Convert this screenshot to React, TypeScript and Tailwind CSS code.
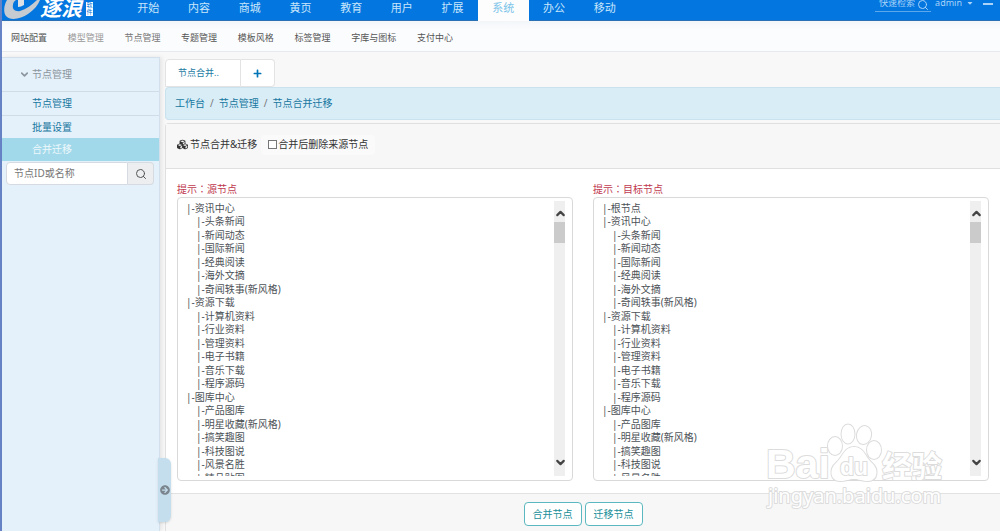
import { useRef } from "react";
import { ChevronDown, ChevronUp, Search } from "lucide-react";
import { FaArrowCircleRight, FaCaretDown, FaCubes, FaPlus } from "react-icons/fa";

type TreeNode = { name: string; level: number };

const modules = ["开始", "内容", "商城", "黄页", "教育", "用户", "扩展", "系统", "办公", "移动"];
const activeModule = "系统";

const sections = [
  { name: "网站配置", tone: "text-[#555]" },
  { name: "模型管理", tone: "text-[#999]" },
  { name: "节点管理", tone: "text-[#777]" },
  { name: "专题管理", tone: "text-[#555]" },
  { name: "模板风格", tone: "text-[#555]" },
  { name: "标签管理", tone: "text-[#555]" },
  { name: "字库与图标", tone: "text-[#555]" },
  { name: "支付中心", tone: "text-[#555]" },
];

const group = (name: string, children: string[]): TreeNode[] => [
  { name, level: 0 },
  ...children.map((child) => ({ name: child, level: 1 })),
];

const nodes: TreeNode[] = [
  ...group("资讯中心", ["头条新闻", "新闻动态", "国际新闻", "经典阅读", "海外文摘", "奇闻轶事(新风格)"]),
  ...group("资源下载", ["计算机资料", "行业资料", "管理资料", "电子书籍", "音乐下载", "程序源码"]),
  ...group("图库中心", ["产品图库", "明星收藏(新风格)", "搞笑趣图", "科技图说", "风景名胜", "精品贴图"]),
];

const targetNodes: TreeNode[] = [{ name: "根节点", level: 0 }, ...nodes];

function Logo() {
  return (
    <a href="#" aria-label="逐浪" className="flex h-[21px] w-[121px] shrink-0 items-start text-white">
      <svg className="ml-0.5 h-[21px] w-[36px] shrink-0" viewBox="0 0 36 21" aria-hidden="true">
        <path
          d="M3 0C0 5 -1 12 2 16C6 21 17 19 24 14C30 10 34 5 36 0H33C28 5 22 9 16 11C11 12 8 9 9 5C9 3 10 1 12 0Z"
          fill="#c6cbd1"
        />
        <path d="M14 0h6v5q-3 2 -6 2Z" fill="#dde1e6" />
      </svg>
      <span className="text-[21px] leading-4 font-bold italic">逐浪</span>
      <span className="mt-0.5 ml-1 grid w-[7px] place-items-center bg-white text-[6px] leading-[7px] text-[#0275d8]">
        <span>软</span>
        <span>件</span>
      </span>
    </a>
  );
}

function Header() {
  return (
    <header className="flex h-[21px] border-b border-[#2b6fb5] bg-[#0376e0]">
      <Logo />
      <nav className="grid w-[507px] shrink-0 grid-cols-10">
        {modules.map((name) => (
          <a
            key={name}
            href="#"
            className={
              name === activeModule
                ? "h-[21px] bg-[#fdfdfe] pb-[6px] text-center text-[11px] leading-[15px] text-[#7cc4e8]"
                : "h-[20px] pb-[5px] text-center text-[11px] leading-[15px] text-[#c9e6fb]"
            }
          >
            {name}
          </a>
        ))}
      </nav>
      <div className="-mt-[6px] mr-[7px] ml-auto flex h-[18px] items-center text-[#a9d3f7]">
        <label className="flex h-[18px] items-center border-b border-[#5ca8ea] pl-1">
          <input
            aria-label="快速检索"
            placeholder="快速检索"
            className="w-[38px] bg-transparent text-[9px] leading-4 outline-none placeholder:text-[#a9d3f7]"
          />
          <Search className="mt-1 mr-0.5 size-3" strokeWidth={2} />
        </label>
        <button type="button" className="ml-1 flex items-center gap-1 text-[9px] leading-4">
          admin
          <FaCaretDown className="size-2" />
        </button>
        <button type="button" aria-label="最小化" className="mt-px ml-[9px] h-0.5 w-[10px] bg-[#a9d3f7]" />
      </div>
    </header>
  );
}

function SubNav() {
  return (
    <nav className="h-[31px] border-b border-[#e6e9ee] bg-gradient-to-b from-[#f3f6f9] to-[#fbfcfe] to-30% pl-[9px]">
      <div className="flex h-full w-[442px] items-center justify-between pt-1">
        {sections.map(({ name, tone }) => (
          <a key={name} href="#" className={`text-[9px] leading-4 ${tone}`}>
            {name}
          </a>
        ))}
      </div>
    </nav>
  );
}

function Sidebar() {
  return (
    <aside className="relative w-[158px] shrink-0 border-t border-r border-[#d3e0eb] bg-[#e4f0fa] text-[10px] shadow-[2px_0_4px_rgba(0,0,0,0.08)]">
      <button
        type="button"
        className="flex h-[34px] w-full items-center gap-0.5 border-b border-[#cfdde9] pl-[17px] text-[#8b959d]"
      >
        <ChevronDown className="size-[11px]" strokeWidth={3.5} />
        节点管理
      </button>
      <a href="#" className="block border-b border-[#cfdde9] pl-[30px] leading-[23px] text-[#17779f]">
        节点管理
      </a>
      <a href="#" className="block pl-[30px] leading-[22px] text-[#17779f]">
        批量设置
      </a>
      <a href="#" className="block bg-[#a2d9ea] pl-[30px] leading-[23px] text-[#edf8fc]">
        合并迁移
      </a>
      <form className="mt-px mr-[5px] ml-1 flex h-[23px]" onSubmit={(e) => e.preventDefault()}>
        <input
          aria-label="节点ID或名称"
          placeholder="节点ID或名称"
          className="min-w-0 flex-1 rounded-l-sm border border-[#d5dbe0] bg-white pl-[7px] text-[10px] outline-none placeholder:text-[#777]"
        />
        <button
          type="submit"
          aria-label="搜索"
          className="grid w-[26px] place-items-center rounded-r-sm border border-l-0 border-[#d5dbe0] bg-[#eceef0] text-[#555]"
        >
          <Search className="size-3" strokeWidth={2} />
        </button>
      </form>
      <button
        type="button"
        aria-label="收起侧栏"
        className="absolute top-[400px] -right-3 z-10 grid h-[64px] w-[13px] place-items-center rounded-r-md bg-[#c5deee] text-[#7b858d] shadow-sm"
      >
        <FaArrowCircleRight className="size-[10px]" />
      </button>
    </aside>
  );
}

function NodeList({ id, label, items }: { id: string; label: string; items: TreeNode[] }) {
  const list = useRef<HTMLSelectElement>(null);
  const scroll = (top: number) => list.current?.scrollBy({ top });

  return (
    <div className="min-w-0">
      <label
        htmlFor={id}
        className="block font-['Noto_Sans_CJK_TC',sans-serif] text-[10px] leading-4 text-[#c0394f]"
      >
        {label}
      </label>
      <div className="flex rounded-sm border border-[#d9d9d9] bg-white pt-0.5 pr-[7px] pb-1 pl-2">
        <select
          id={id}
          ref={list}
          multiple
          className="h-[276px] min-w-0 flex-1 overflow-hidden border-0 bg-white p-0 text-[10px] text-[#4c5257] outline-none"
        >
          {items.map(({ name, level }) => (
            <option
              key={name}
              className={
                level === 0
                  ? "block min-h-0 p-0 leading-[13px] odd:h-[13px] even:h-[14px]"
                  : "block min-h-0 p-0 pl-[10px] leading-[13px] odd:h-[13px] even:h-[14px]"
              }
            >
              {`|-${name}`}
            </option>
          ))}
        </select>
        <div className="mt-px flex w-[11px] flex-col bg-[#efefef] text-[#444]">
          <button
            type="button"
            aria-label="向上滚动"
            className="grid h-[21px] place-items-center pt-1"
            onClick={() => scroll(-27)}
          >
            <ChevronUp className="size-[13px]" strokeWidth={4} />
          </button>
          <div className="h-[21px] bg-[#cbcbcb]" />
          <button
            type="button"
            aria-label="向下滚动"
            className="mt-auto grid h-[28px] place-items-center"
            onClick={() => scroll(27)}
          >
            <ChevronDown className="size-[13px]" strokeWidth={4} />
          </button>
        </div>
      </div>
    </div>
  );
}

function Watermark() {
  return (
    <svg
      className="pointer-events-none absolute right-[50px] bottom-[18px] h-[92px] w-[186px]"
      viewBox="0 0 186 92"
      fill="#fff"
      stroke="#dcdcdc"
      strokeWidth="2"
      strokeLinejoin="round"
      aria-hidden="true"
    >
      <g paintOrder="stroke">
        <text x="2" y="57" fontSize="41" fontWeight="700" fontFamily="Liberation Sans, sans-serif">
          Bai
        </text>
        <ellipse cx="71" cy="25" rx="7" ry="9" />
        <ellipse cx="84" cy="13" rx="6.5" ry="9.5" />
        <ellipse cx="100" cy="14" rx="7" ry="9" transform="rotate(12 100 14)" />
        <ellipse cx="110" cy="29" rx="7" ry="9" />
        <path d="M90 26C80 26 79 36 72 42C65 48 66 60 76 60C82 60 85 58 90 58C95 58 98 60 104 60C114 60 115 48 108 42C101 36 100 26 90 26Z" />
        <text x="76" y="54" fontSize="23" fontWeight="700" fontFamily="Liberation Sans, sans-serif">
          du
        </text>
        <text x="118" y="56" fontSize="30" fontWeight="700" fontFamily="Noto Sans CJK SC, sans-serif">
          经验
        </text>
        <text x="4" y="82" fontSize="20" fontFamily="Noto Sans, sans-serif">
          jingyan.baidu.com
        </text>
      </g>
    </svg>
  );
}

function MergePanel() {
  return (
    <section className="mt-[3px] flex flex-1 flex-col rounded-tl-sm border-t border-l border-[#e0e0e0] bg-white">
      <div className="flex h-[45px] items-center border-b border-[#e0e0e0] bg-[#f7f7f7] pb-[3px] pl-[11px] text-[10px] text-[#333]">
        <FaCubes className="mr-0.5 size-[11px]" />
        <h1>节点合并&amp;迁移</h1>
        <label className="ml-1 flex h-5 items-center gap-px rounded-sm bg-[#fafafa] px-[7px]">
          <input
            type="checkbox"
            className="size-[9px] appearance-none border border-[#777] bg-white checked:bg-[#0275d8]"
          />
          合并后删除来源节点
        </label>
      </div>
      <div className="grid grid-cols-2 gap-5 pt-3 pr-[11px] pb-3 pl-[11px]">
        <NodeList id="source" label="提示：源节点" items={nodes} />
        <NodeList id="target" label="提示：目标节点" items={targetNodes} />
      </div>
      <div className="flex flex-1 items-start justify-center gap-[3px] border-t border-[#e2e2e2] bg-[#f7f7f7] pt-2 pb-1 text-[10px] text-[#218f99]">
        <button type="button" className="h-6 rounded-sm border border-[#5cb8c0] bg-white px-2">
          合并节点
        </button>
        <button type="button" className="h-6 rounded-sm border border-[#5cb8c0] bg-white px-2">
          迁移节点
        </button>
      </div>
    </section>
  );
}

export default function App() {
  return (
    <div className="flex min-h-screen flex-col border-l-2 border-[#6683c6] bg-[#f8f8f9] font-['Noto_Sans','Noto_Sans_CJK_SC',sans-serif]">
      <Header />
      <SubNav />
      <div className="flex flex-1 gap-[5px] pt-[5px]">
        <Sidebar />
        <main className="relative flex min-w-0 flex-1 flex-col pt-0.5">
          <div className="flex h-[28px] text-[9px] text-[#1c7ba3]">
            <a
              href="#"
              className="flex w-[76px] items-center rounded-tl-sm border border-[#e3e3e3] bg-white pl-3"
            >
              节点合并..
            </a>
            <button
              type="button"
              aria-label="新建标签"
              className="grid w-[34px] place-items-center rounded-r-sm border border-l-0 border-[#e3e3e3] bg-white text-[#0275b8]"
            >
              <FaPlus className="size-[9px]" />
            </button>
          </div>
          <nav className="flex h-[33px] items-center gap-[5px] rounded-l-sm border border-r-0 border-[#c9e2ee] bg-[#d9edf7] pl-[9px] text-[10px] text-[#17779f]">
            <a href="#">工作台</a>
            <span className="text-[#777]">/</span>
            <a href="#">节点管理</a>
            <span className="text-[#777]">/</span>
            <a href="#">节点合并迁移</a>
          </nav>
          <MergePanel />
          <Watermark />
        </main>
      </div>
    </div>
  );
}
